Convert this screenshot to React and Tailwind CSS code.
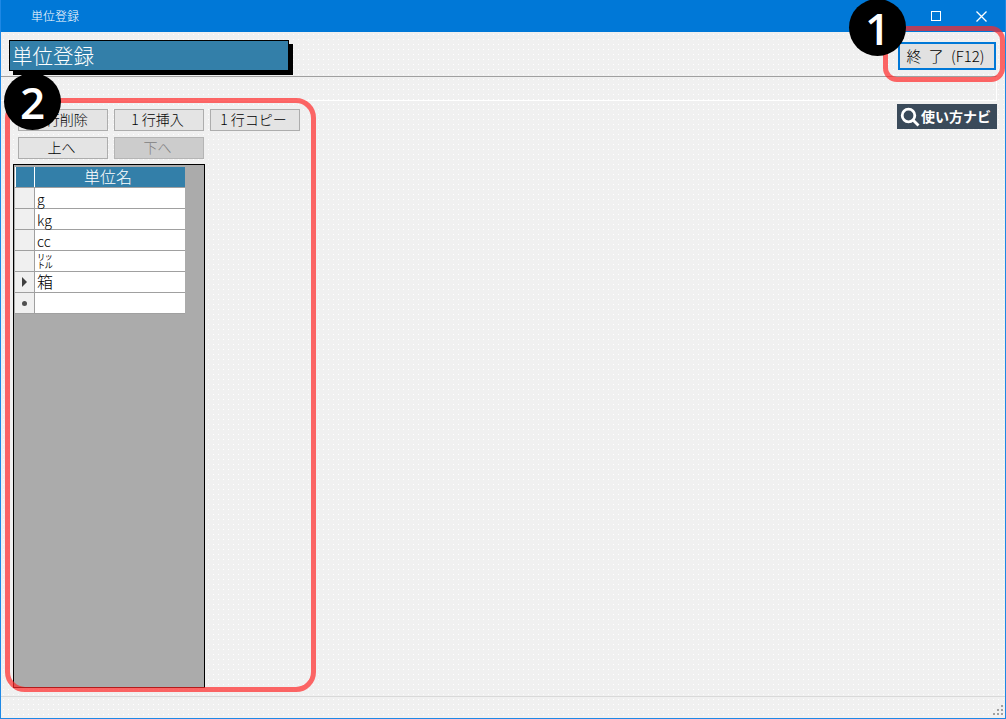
const jp = 'font-["Noto_Sans_CJK_JP",sans-serif] font-light';

const actions = [
  [{ label: '1 行削除' }, { label: '1 行挿入' }, { label: '1 行コピー' }],
  [{ label: '上へ' }, { label: '下へ', disabled: true }],
];

const rows = [
  { name: 'g' },
  { name: 'kg' },
  { name: 'cc' },
  { name: '㍑', big: true },
  { name: '箱', big: true, current: true },
  { name: '', isNew: true },
];

function ActionButton({ label, disabled }) {
  return (
    <button
      className={
        disabled
          ? 'w-[90px] h-[22px] border border-[#b5b5b5] bg-[#cccccc] text-[#808080] text-[14px] leading-[18px] pb-[2px] pr-[3px]'
          : 'w-[90px] h-[22px] border border-[#adadad] bg-[#e4e4e4] text-black text-[14px] leading-[18px] pb-[2px] pr-[3px]'
      }
    >
      {label}
    </button>
  );
}

function UnitGrid() {
  return (
    <div className="w-[192px] h-[524px] border border-black bg-[#ababab] pl-[1px] pt-[2px]">
      <div className="flex h-[21px] w-[170px] border-b border-[#a0a0a0]">
        <div className="w-[20px] bg-[#337fa9] border-x border-x-white" />
        <div className="w-[150px] bg-[#337fa9] text-white text-[16px] leading-[19px] text-center pr-[4px]">単位名</div>
      </div>
      {rows.map((row, idx) => (
        <div key={idx} className="flex h-[21px] w-[170px] border-b border-[#a0a0a0]">
          <div className="w-[20px] bg-[#f0f0f0] border-r border-[#a0a0a0] flex items-center justify-center">
            {row.current && <div className="w-0 h-0 border-y-[5px] border-y-transparent border-l-[5px] border-l-[#404040]" />}
            {row.isNew && <div className="w-[5px] h-[5px] rounded-full bg-[#505050]" />}
          </div>
          <div className={row.big ? 'w-[150px] bg-white pl-[2px] text-[16px] leading-[19px] text-black' : 'w-[150px] bg-white pl-[2px] pt-[1px] text-[14px] leading-[20px] text-black'}>
            {row.name}
          </div>
        </div>
      ))}
    </div>
  );
}

export default function App() {
  return (
    <div className={`relative w-[1006px] h-[719px] overflow-hidden flex flex-col border border-t-0 border-[#1e88e5] bg-[#f0f0f0] ${jp}`}>
      {/* Title bar */}
      <div className="h-[32px] shrink-0 bg-[#0078d7] flex items-center text-white">
        <span className="ml-[30px] text-[12px]">単位登録</span>
        <div className="ml-auto flex items-center">
          <div className="w-[10px] h-[10px] border border-white mr-[35px]" />
          <svg width="11" height="11" viewBox="0 0 11 11" className="mr-[18px]" stroke="white" strokeWidth="1.3">
            <path d="M0.5 0.5L10.5 10.5M10.5 0.5L0.5 10.5" />
          </svg>
        </div>
      </div>

      {/* Dotted form surface */}
      <div className="flex-1 flex flex-col bg-[radial-gradient(#ffffff_0.6px,transparent_0.7px)] bg-[length:5px_5px]">
        {/* Heading + exit */}
        <div className="h-[44px] shrink-0 flex items-start justify-between pt-[8px] pl-[8px] pr-[9px]">
          <div className="w-[280px] h-[31px] border border-black bg-[#337fa9] shadow-[4px_4px_0_#000000] text-white text-[20.5px] leading-[28px] pl-[2px]">
            単位登録
          </div>
          <button className="mt-[2px] w-[98px] h-[28px] border-2 border-[#0078d7] bg-[#e1e1e1] text-black text-[15px] leading-[22px] whitespace-pre [word-spacing:4px] pr-[3px]">
            終 了 (F12)
          </button>
        </div>

        {/* Empty group strip */}
        <div className="h-[25px] shrink-0 mr-[8px] border-t border-t-[#a0a0a0] border-r border-r-white border-b border-b-white" />

        {/* Body */}
        <div className="flex-1 flex justify-between">
          <div className="pl-[12px] pt-[8px]">
            <div className="flex flex-col gap-[6px] pl-[5px] mb-[5px]">
              {actions.map((line, i) => (
                <div key={i} className="flex gap-[6px]">
                  {line.map((a) => (
                    <ActionButton key={a.label} {...a} />
                  ))}
                </div>
              ))}
            </div>
            <UnitGrid />
          </div>
          <div className="pt-[3px] pr-[8px]">
            <button className="w-[100px] h-[25px] bg-[#3a4a5a] text-white text-[14px] font-bold flex items-center gap-[1px] pl-[3px] whitespace-nowrap">
              <svg width="20" height="20" viewBox="0 0 20 20" fill="none" stroke="white" strokeWidth="2.8">
                <circle cx="8.5" cy="8.5" r="6.3" />
                <path d="M13 13L18.5 18.5" />
              </svg>
              使い方ナビ
            </button>
          </div>
        </div>

        {/* Status bar */}
        <div className="h-[22px] shrink-0 border-t border-[#d9d9d9] flex justify-end items-end pr-[1px] pb-[2px]">
          <svg width="12" height="12" viewBox="0 0 12 12" fill="#a0a0a0">
            <rect x="9" y="1" width="2" height="2" />
            <rect x="5" y="5" width="2" height="2" />
            <rect x="9" y="5" width="2" height="2" />
            <rect x="1" y="9" width="2" height="2" />
            <rect x="5" y="9" width="2" height="2" />
            <rect x="9" y="9" width="2" height="2" />
          </svg>
        </div>
      </div>

      {/* Annotations on top of the screenshot */}
      <div className="absolute left-[882px] top-[26px] w-[122px] h-[56px] rounded-[14px] border-[5px] border-[#ff2828b3]" />
      <div className="absolute left-[4px] top-[98px] w-[311px] h-[594px] rounded-[20px] border-[5px] border-[#ff2828b3]" />
      <div className='absolute left-[848px] top-[-1px] w-[57px] h-[57px] rounded-full bg-black text-white flex items-center justify-center text-[44px] leading-none font-semibold font-["Open_Sans",sans-serif]'>1</div>
      <div className='absolute left-[3px] top-[73px] w-[57px] h-[57px] rounded-full bg-black text-white flex items-center justify-center text-[44px] leading-none font-semibold font-["Open_Sans",sans-serif]'>2</div>
    </div>
  );
}
